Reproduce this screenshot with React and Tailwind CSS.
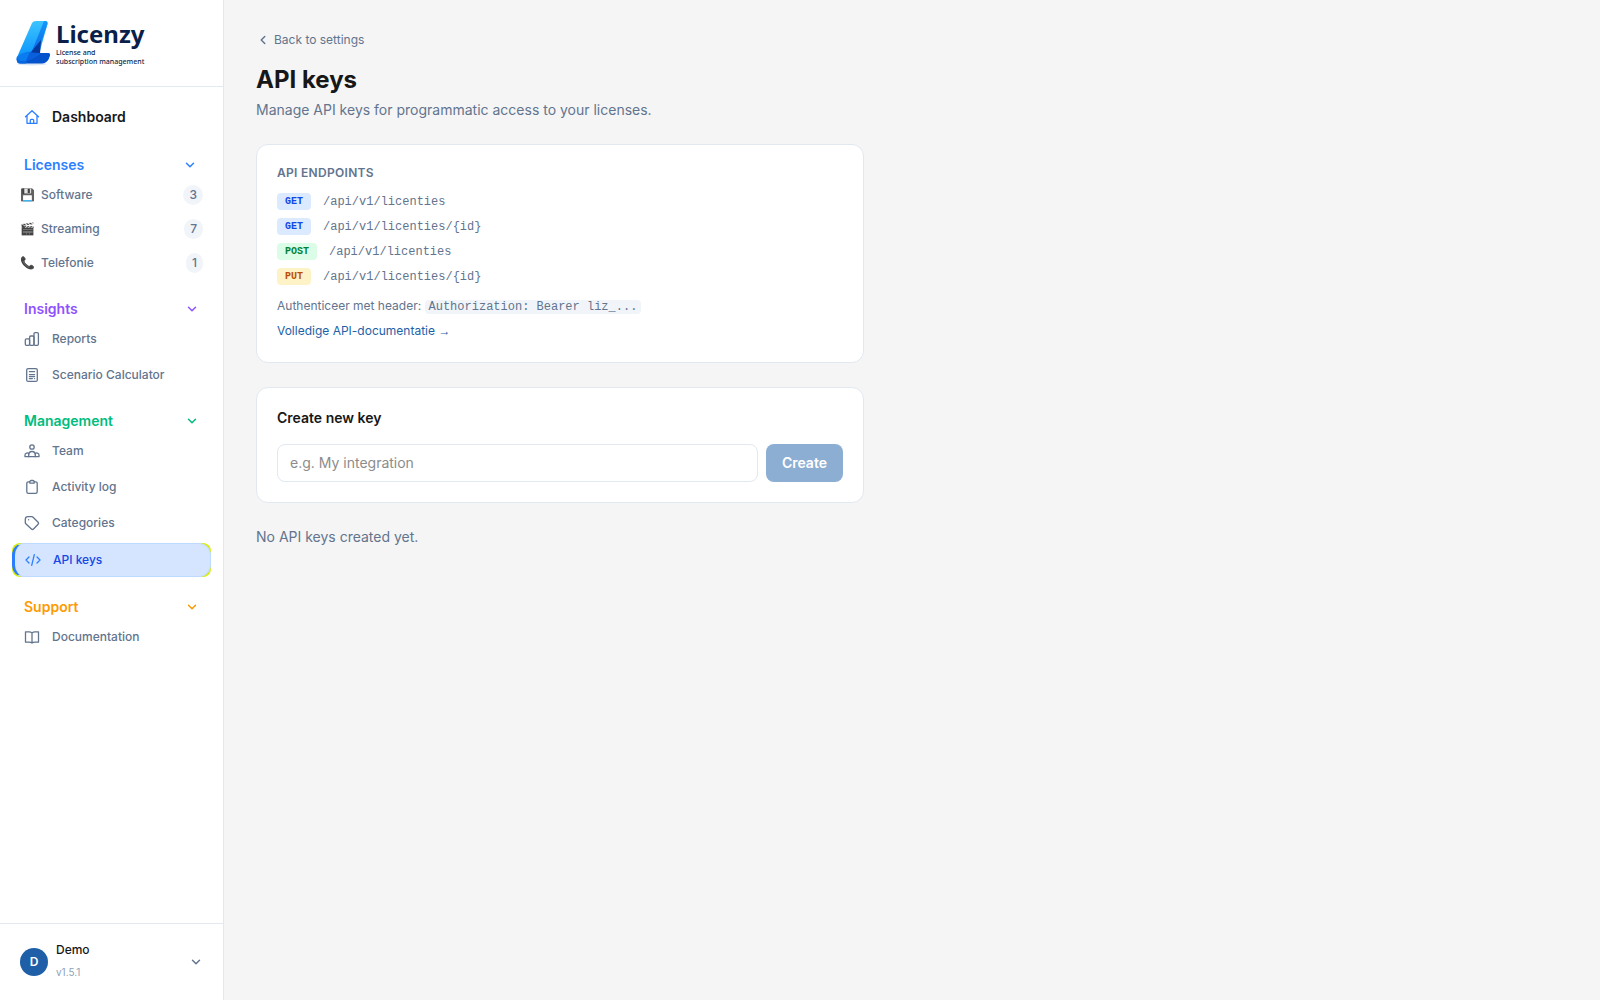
import React, { useState } from "react";
import { ChevronDown, ChevronLeft } from "lucide-react";

const Icon = ({ children }) => (
  <svg
    viewBox="0 0 16 16"
    fill="none"
    stroke="currentColor"
    strokeWidth="1.3"
    strokeLinecap="round"
    strokeLinejoin="round"
    className="size-4 shrink-0"
    aria-hidden="true"
  >
    {children}
  </svg>
);

const HomeIcon = () => (
  <Icon>
    <path d="M1.5 7.7 8 1.7l6.5 6M3 6.5v7.8h10V6.5" />
    <path d="M6.3 14.3v-3c0-.6.4-1 1-1h1.4c.6 0 1 .4 1 1v3" />
  </Icon>
);

const ChartIcon = () => (
  <Icon>
    <rect x="1.3" y="7.8" width="4.3" height="6.5" rx="1.2" />
    <rect x="5.6" y="5" width="4.4" height="9.3" rx="1.2" />
    <rect x="10" y="1.6" width="4.4" height="12.7" rx="1.2" />
  </Icon>
);

const CalculatorIcon = () => (
  <Icon>
    <rect x="2.7" y="1.6" width="10.6" height="12.8" rx="1.5" />
    <path d="M5.4 4.6h5.2M5.4 7.6h5.2M5.4 9.6h5.2M5.4 11.6h3M10.5 11.6h.1" />
  </Icon>
);

const TeamIcon = () => (
  <Icon>
    <circle cx="8" cy="4" r="2.2" />
    <path d="M4.7 13.7v-1.9a3.3 3.3 0 0 1 6.6 0v1.9z" />
    <path d="M4.7 13.7H1v-1.6a2.1 2.1 0 0 1 3.9-1.1M11.3 13.7H15v-1.6a2.1 2.1 0 0 0-3.9-1.1" />
  </Icon>
);

const ClipboardIcon = () => (
  <Icon>
    <path d="M5.8 2.8H4.4c-.9 0-1.6.7-1.6 1.6v8.4c0 .9.7 1.6 1.6 1.6h7.2c.9 0 1.6-.7 1.6-1.6V4.4c0-.9-.7-1.6-1.6-1.6h-1.4" />
    <path d="M5.8 2.8c0-.8.6-1.3 1.3-1.3h1.8c.7 0 1.3.5 1.3 1.3v1.3H5.8z" />
  </Icon>
);

const TagIcon = () => (
  <Icon>
    <path d="M4 1.7h4c.4 0 .8.2 1.1.5l5 5c.6.6.6 1.5 0 2.1l-4.6 4.7c-.6.6-1.5.6-2.1 0L1.8 8.8a1.5 1.5 0 0 1-.5-1.1V4.4C1.3 2.9 2.5 1.7 4 1.7z" />
    <path d="M4.6 4.7v.1" />
  </Icon>
);

const CodeIcon = () => (
  <Icon>
    <path d="M4 5 1 8l3 3M12 5l3 3-3 3M9.3 2.7 6.7 13.3" />
  </Icon>
);

const BookIcon = () => (
  <Icon>
    <path d="M8 3.9C7.3 3.2 6.3 2.8 5 2.8H1.5v10.4H5c1.3 0 2.3.3 3 .9.7-.6 1.7-.9 3-.9h3.5V2.8H11c-1.3 0-2.3.4-3 1.1zM8 3.9v9.9" />
  </Icon>
);

const sections = [
  {
    title: "Insights",
    color: "text-violet-500",
    items: [
      { label: "Reports", icon: ChartIcon },
      { label: "Scenario Calculator", icon: CalculatorIcon },
    ],
  },
  {
    title: "Management",
    color: "text-emerald-500",
    items: [
      { label: "Team", icon: TeamIcon },
      { label: "Activity log", icon: ClipboardIcon },
      { label: "Categories", icon: TagIcon },
      { label: "API keys", icon: CodeIcon, active: true },
    ],
  },
  {
    title: "Support",
    color: "text-amber-500",
    items: [{ label: "Documentation", icon: BookIcon }],
  },
];

const categories = [
  { emoji: "💾", label: "Software", count: 3 },
  { emoji: "🎬", label: "Streaming", count: 7 },
  { emoji: "📞", label: "Telefonie", count: 1 },
];

const endpoints = [
  { method: "GET", path: "/api/v1/licenties", color: "bg-blue-100 text-blue-700" },
  { method: "GET", path: "/api/v1/licenties/{id}", color: "bg-blue-100 text-blue-700" },
  { method: "POST", path: "/api/v1/licenties", color: "bg-green-100 text-green-700" },
  { method: "PUT", path: "/api/v1/licenties/{id}", color: "bg-amber-100 text-amber-700" },
];

const Logo = () => (
  <a href="#" className="flex items-start gap-1.5" aria-label="Licenzy">
    <svg viewBox="0 0 34 46" className="h-[46px] w-[34px]" aria-hidden="true">
      <defs>
        <linearGradient id="stem" x1="0" y1="0" x2="0" y2="1">
          <stop offset="0" stopColor="#3cc4ff" />
          <stop offset="1" stopColor="#0a93fd" />
        </linearGradient>
        <linearGradient id="side" x1="0" y1="0" x2="0" y2="1">
          <stop offset="0" stopColor="#1798f8" />
          <stop offset="1" stopColor="#0a62e4" />
        </linearGradient>
      </defs>
      <ellipse cx="16" cy="44" rx="15" ry="1.5" fill="#dbe6f3" />
      <path d="M16 3Q17 1 20 1h9q3 0 2.500 3L23 34 .7 38z" fill="url(#stem)" />
      <path d="M28 1h1q3 0 2.500 3L24 26 14 36z" fill="url(#side)" />
      <path d="M25 20 15 32l-2 4 11-2z" fill="#04389d" />
      <path d="M.7 37q5-5 14-5.500L11 43H4.500Q0 43 .7 37z" fill="#0a7cf0" />
      <path d="M14 32q4 1 10 1h8q2 0 2 2-2 8-8 8H9z" fill="#0a5fdc" />
      <path d="M.7 38Q4 43 11 41q9-3 14-8h7q2 0 2 2-2 8.500-8 8.500H4.500Q0 43.500 .7 38z" fill="#0553cc" />
      <path d="M1 38q2 4 7 4l3-1-1 2.500H4.500Q0 43.500 1 38z" fill="#0868e2" />
    </svg>
    <span className="flex flex-col text-[#0b1f4b]">
      <span className="font-['Noto_Sans',sans-serif] text-2xl leading-7 font-bold">
        Licenzy
      </span>
      <span className="font-['Noto_Sans',sans-serif] text-[7px] leading-[9px] font-medium">
        License and
        <br />
        subscription management
      </span>
    </span>
  </a>
);

const SectionHeader = ({ title, color }) => (
  <button
    className={`flex w-full items-center justify-between px-3 py-1 text-sm leading-5 font-semibold ${color}`}
  >
    {title}
    <ChevronDown className="size-3.5" strokeWidth={2.5} />
  </button>
);

const NavItem = ({ label, icon: ItemIcon, active }) => (
  <div className={active ? "rounded-lg bg-[#dcec00]" : ""}>
    <a
      href="#"
      aria-current={active ? "page" : undefined}
      className={`flex items-center gap-3 rounded-xl py-1.5 text-xs leading-5 font-medium ${
        active
          ? "border border-l-[3px] border-blue-200 border-l-blue-500 bg-[#d5e4ff] pr-3 pl-2.5 text-blue-700"
          : "px-3 text-slate-500"
      }`}
    >
      <span className={active ? "text-blue-500" : ""}>
        <ItemIcon />
      </span>
      {label}
    </a>
  </div>
);

const Sidebar = () => (
  <aside className="flex w-56 shrink-0 flex-col border-r border-slate-200 bg-white">
    <div className="border-b border-slate-200 px-4 py-5">
      <Logo />
    </div>
    <nav className="flex flex-1 flex-col gap-4 p-3">
      <a
        href="#"
        className="flex items-center gap-3 px-3 py-2 text-sm leading-5 font-semibold"
      >
        <span className="text-blue-500">
          <HomeIcon />
        </span>
        Dashboard
      </a>
      <div>
        <div className="pr-0.5">
          <SectionHeader title="Licenses" color="text-blue-500" />
        </div>
        <div className="flex flex-col gap-0.5">
          {categories.map((category) => (
            <a
              key={category.label}
              href="#"
              className="flex items-center gap-1.5 px-2 py-1.5 text-xs leading-5 font-medium text-slate-500"
            >
              <span className="w-[15px]">{category.emoji}</span>
              <span className="flex-1">{category.label}</span>
              <span className="rounded-full bg-slate-100 px-1.5">
                {category.count}
              </span>
            </a>
          ))}
        </div>
      </div>
      {sections.map((section) => (
        <div key={section.title}>
          <SectionHeader title={section.title} color={section.color} />
          <div className="flex flex-col gap-1">
            {section.items.map((item) => (
              <NavItem key={item.label} {...item} />
            ))}
          </div>
        </div>
      ))}
    </nav>
    <div className="border-t border-slate-200 px-3 py-4">
      <button className="flex w-full items-center gap-2 px-2 text-left">
        <span className="flex size-7 items-center justify-center rounded-full bg-[#1e5fa8] text-xs font-semibold text-white">
          D
        </span>
        <span className="flex flex-1 flex-col">
          <span className="text-xs leading-5 font-medium">Demo</span>
          <span className="text-[10px] leading-6 text-slate-400">v1.5.1</span>
        </span>
        <ChevronDown className="size-3.5 text-slate-500" strokeWidth={2.5} />
      </button>
    </div>
  </aside>
);

const EndpointsCard = () => (
  <section className="rounded-xl border border-slate-200 bg-white p-5 text-xs text-slate-500">
    <h2 className="leading-4 font-semibold tracking-wide uppercase">
      API endpoints
    </h2>
    <ul className="mt-3 flex flex-col gap-2 font-['Liberation_Mono',monospace]">
      {endpoints.map((endpoint) => (
        <li
          key={endpoint.method + endpoint.path}
          className="flex items-center gap-3"
        >
          <span
            className={`rounded px-2 text-[10px] leading-[17px] font-bold ${endpoint.color}`}
          >
            {endpoint.method}
          </span>
          <code className="font-[inherit] leading-4">{endpoint.path}</code>
        </li>
      ))}
    </ul>
    <p className="mt-3 leading-[18px]">
      Authenticeer met header:{" "}
      <code className="rounded bg-slate-100 px-1 font-['Liberation_Mono',monospace]">
        Authorization: Bearer liz_...
      </code>
    </p>
    <a
      href="#"
      className="mt-1.5 mb-0.5 block w-fit leading-[18px] text-[#1e5fa8]"
    >
      Volledige API-documentatie{" "}
      <span className="font-['Liberation_Sans',sans-serif]">→</span>
    </a>
  </section>
);

const CreateKeyCard = () => {
  const [name, setName] = useState("");

  return (
    <section className="rounded-xl border border-slate-200 bg-white p-5">
      <h2 className="text-sm leading-5 font-semibold">Create new key</h2>
      <form className="mt-4 flex gap-2" onSubmit={(e) => e.preventDefault()}>
        <input
          type="text"
          aria-label="Key name"
          placeholder="e.g. My integration"
          value={name}
          onChange={(e) => setName(e.target.value)}
          className="min-w-0 flex-1 rounded-lg border border-slate-200 px-3 py-2 text-sm leading-5 placeholder:text-[#8c8c8c]"
        />
        <button
          disabled={!name}
          className="rounded-lg bg-[#1e5fa8] px-4 py-2 text-sm leading-5 font-semibold text-white disabled:opacity-50"
        >
          Create
        </button>
      </form>
    </section>
  );
};

export default function App() {
  return (
    <div className="flex min-h-screen bg-[#f5f5f5] font-[Inter,sans-serif] text-neutral-900">
      <Sidebar />
      <main className="flex-1 p-8">
        <div className="flex max-w-[608px] flex-col">
          <a
            href="#"
            className="flex items-center gap-1 text-xs leading-4 text-slate-500"
          >
            <ChevronLeft className="size-3.5" strokeWidth={2.5} />
            Back to settings
          </a>
          <h1 className="mt-4 text-2xl leading-8 font-bold">API keys</h1>
          <p className="mt-1 mb-6 text-sm leading-5 text-slate-500">
            Manage API keys for programmatic access to your licenses.
          </p>
          <div className="flex flex-col gap-6">
            <EndpointsCard />
            <CreateKeyCard />
            <p className="text-sm leading-5 text-slate-500">
              No API keys created yet.
            </p>
          </div>
        </div>
      </main>
    </div>
  );
}
